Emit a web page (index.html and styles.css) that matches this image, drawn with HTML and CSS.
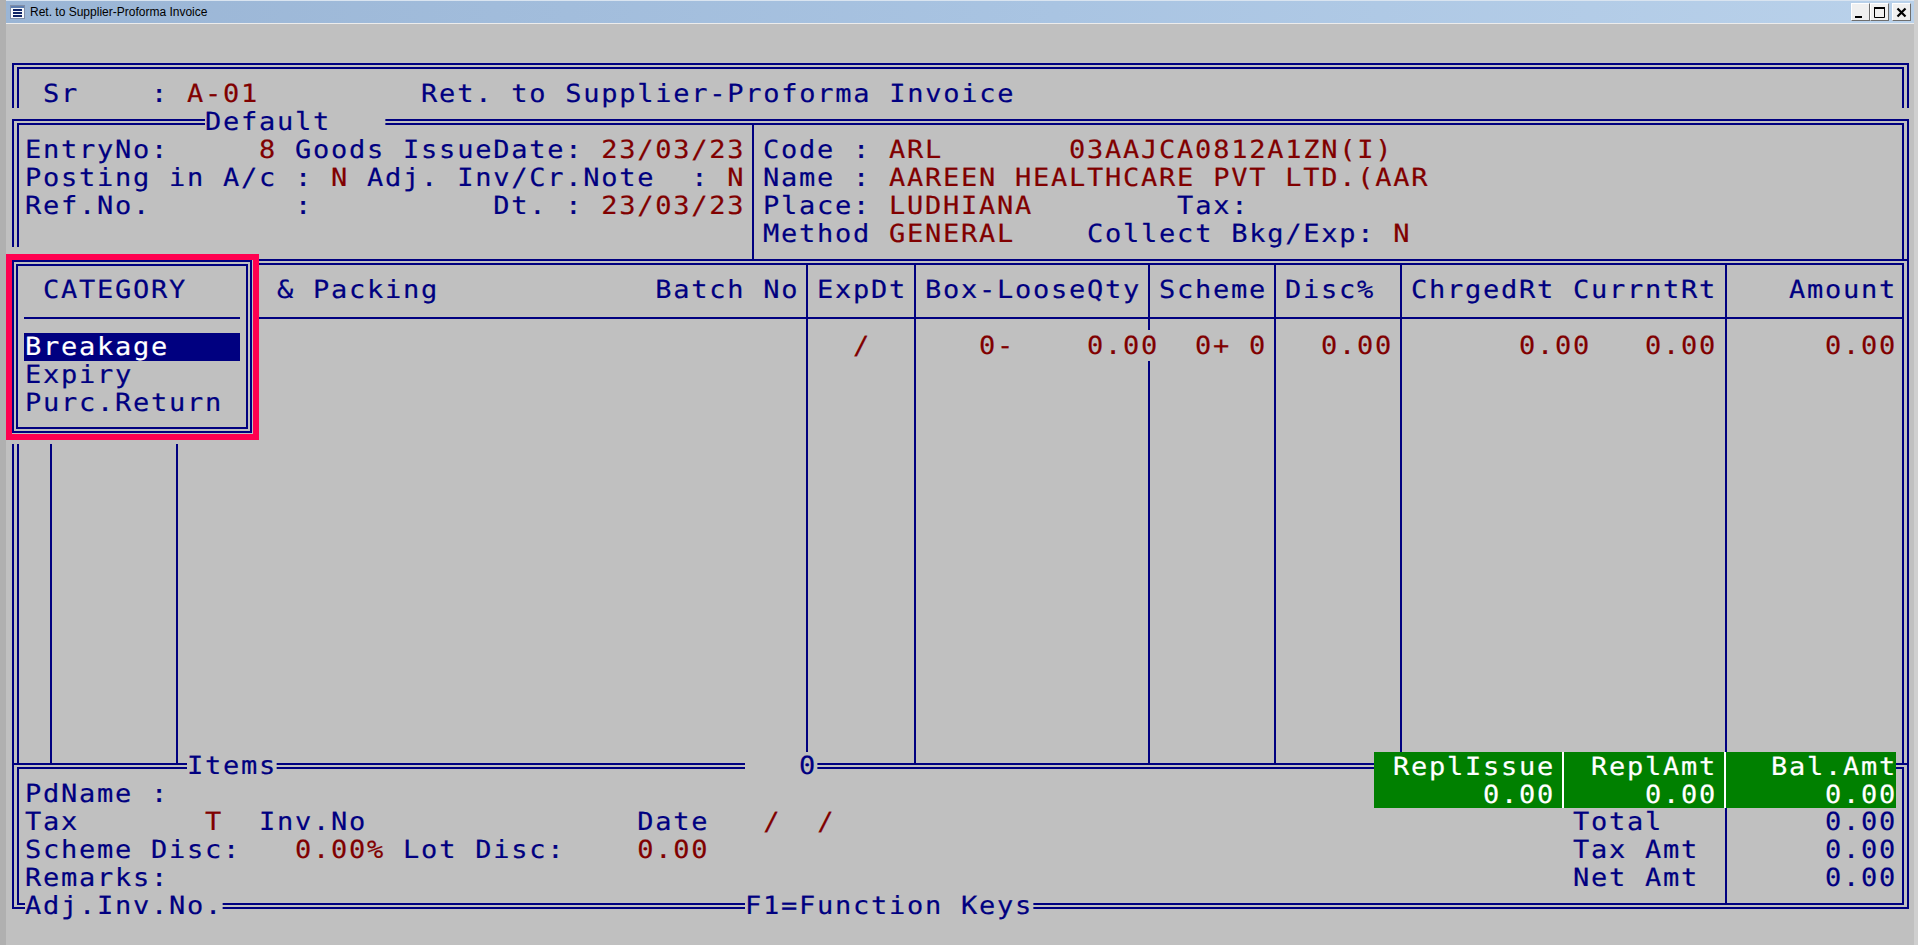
FILE: index.html
```html
<!DOCTYPE html>
<html lang="en">
<head>
<meta charset="utf-8">
<title>Ret. to Supplier-Proforma Invoice</title>
<link rel="stylesheet" href="styles.css">
</head>
<body>
<div class="window">
  <header class="titlebar">
    <svg class="app-icon" width="15" height="14" viewBox="0 0 15 14">
      <rect x="0.5" y="0.5" width="14" height="13" fill="#f6f8fb" stroke="#7f8da8"/>
      <rect x="1" y="1" width="13" height="2" fill="#5f7fb0"/>
      <rect x="3" y="4" width="9" height="2" fill="#0f2466"/>
      <rect x="3" y="7" width="9" height="2" fill="#0f2466"/>
      <rect x="3" y="10" width="9" height="2" fill="#0f2466"/>
    </svg>
    <span class="title-text">Ret. to Supplier-Proforma Invoice</span>
    <div class="win-buttons">
      <button class="win-btn"><svg width="17" height="16" viewBox="0 0 17 16"><rect x="3" y="12" width="7" height="2" fill="#000"/></svg></button>
      <button class="win-btn"><svg width="17" height="16" viewBox="0 0 17 16"><path d="M3.5 3.5h10v10h-10z" fill="none" stroke="#000"/><rect x="3" y="3" width="11" height="2" fill="#000"/></svg></button>
      <button class="win-btn win-close"><svg width="17" height="16" viewBox="0 0 17 16"><path d="M4.5 4.5l8 8M12.5 4.5l-8 8" fill="none" stroke="#000" stroke-width="2.2"/></svg></button>
    </div>
  </header>

  <main class="frame">
    <section class="box box-head">
      <div class="t"> Sr    : <span class="d">A-01</span>         Ret. to Supplier-Proforma Invoice</div>
    </section>

    <section class="box box-info">
      <div class="t legend lg-default">Default   </div>
      <div class="info-left">
        <div class="t">EntryNo:     <span class="d">8</span> Goods IssueDate: <span class="d">23/03/23</span></div>
        <div class="t">Posting in A/c : <span class="d">N</span> Adj. Inv/Cr.Note  : <span class="d">N</span></div>
        <div class="t">Ref.No.        :          Dt. : <span class="d">23/03/23</span></div>
      </div>
      <div class="info-right">
        <div class="t">Code : <span class="d">ARL       03AAJCA0812A1ZN(I)</span></div>
        <div class="t">Name : <span class="d">AAREEN HEALTHCARE PVT LTD.(AAR</span></div>
        <div class="t">Place: <span class="d">LUDHIANA</span>        Tax:</div>
        <div class="t">Method <span class="d">GENERAL</span>    Collect Bkg/Exp: <span class="d">N</span></div>
      </div>
    </section>

    <section class="box box-table">
      <div class="col col-1"><div class="col-head"></div><div class="col-body"></div></div>
      <div class="col col-2"><div class="col-head"></div><div class="col-body"></div></div>
      <div class="col col-3">
        <div class="col-head"><div class="t">     &amp; Packing            Batch No</div></div>
        <div class="col-body"></div>
      </div>
      <div class="col col-4">
        <div class="col-head"><div class="t">ExpDt</div></div>
        <div class="col-body"><div class="t d">  /</div></div>
      </div>
      <div class="col col-5">
        <div class="col-head"><div class="t">Box-LooseQty</div></div>
        <div class="col-body"><div class="t d">   0-    <span class="cut">0.00</span></div></div>
      </div>
      <div class="col col-6">
        <div class="col-head"><div class="t">Scheme</div></div>
        <div class="col-body"><div class="t d">  0+ 0</div></div>
      </div>
      <div class="col col-7">
        <div class="col-head"><div class="t">Disc%</div></div>
        <div class="col-body"><div class="t d">  0.00</div></div>
      </div>
      <div class="col col-8">
        <div class="col-head"><div class="t">ChrgedRt CurrntRt</div></div>
        <div class="col-body"><div class="t d">      0.00   0.00</div></div>
      </div>
      <div class="col col-9">
        <div class="col-head"><div class="t">   Amount</div></div>
        <div class="col-body"><div class="t d">     0.00</div></div>
      </div>
    </section>

    <section class="box box-foot">
      <div class="t legend lg-items">Items</div>
      <div class="t legend lg-count">   0</div>
      <div class="t legend lg-adj">Adj.Inv.No.</div>
      <div class="t legend lg-keys">F1=Function Keys</div>
      <div class="green">
        <div class="green-cell gc-1"><div class="t"> ReplIssue</div><div class="t">      0.00</div></div>
        <div class="green-cell gc-2"><div class="t"> ReplAmt</div><div class="t">    0.00</div></div>
        <div class="green-cell gc-3"><div class="t">  Bal.Amt</div><div class="t">     0.00</div></div>
      </div>
      <div class="foot-left">
        <div class="t">PdName :</div>
        <div class="t">Tax       <span class="d">T</span>  Inv.No               Date   <span class="d">/  /</span></div>
        <div class="t">Scheme Disc:   <span class="d">0.00%</span> Lot Disc:    <span class="d">0.00</span></div>
        <div class="t">Remarks:</div>
      </div>
      <div class="foot-labels">
        <div class="t">Total</div>
        <div class="t">Tax Amt</div>
        <div class="t">Net Amt</div>
      </div>
      <div class="foot-values">
        <div class="t">     0.00</div>
        <div class="t">     0.00</div>
        <div class="t">     0.00</div>
      </div>
    </section>
  </main>

  <aside class="popup">
    <div class="popup-box">
      <div class="popup-head"><div class="t"> CATEGORY</div></div>
      <div class="popup-list">
        <div class="t selected">Breakage</div>
        <div class="t">Expiry</div>
        <div class="t">Purc.Return</div>
      </div>
    </div>
  </aside>
</div>
</body>
</html>
```
FILE: styles.css
```css
* { box-sizing: border-box; }
html, body { margin: 0; padding: 0; height: 100%; overflow: hidden; background: #c0c0c0; }

.window {
  position: relative;
  width: 1918px;
  height: 945px;
  background: #c0c0c0;
  border-left: 6px solid #b0b0b0;
  border-right: 4px solid #cfcfcf;
  overflow: hidden;
}

/* title bar */
.titlebar {
  height: 24px;
  display: flex;
  align-items: center;
  padding: 0 0 1px 4px;
  border-top: 1px solid #d9e4f0;
  border-bottom: 1px solid #ececec;
  background: linear-gradient(90deg, #9ab5d5 0%, #a9c4e2 55%, #b9d1ea 100%);
}
.app-icon { flex: none; }
.title-text {
  margin-left: 5px;
  font: 12px "Liberation Sans", Arial, sans-serif;
  color: #000;
}
.win-buttons { margin-left: auto; display: flex; align-self: flex-start; margin-top: 2px; }
.win-btn {
  width: 19px;
  height: 18px;
  padding: 0;
  margin: 0;
  display: block;
  background: #f0f0f0;
  border: 1px solid;
  border-color: #fff #6e6e6e #6e6e6e #fff;
}
.win-btn svg { display: block; }
.win-close { margin-left: 3px; margin-right: 3px; }

/* character cell text: 18 x 28 px */
.t {
  height: 28px;
  font-family: "DejaVu Sans Mono", monospace;
  font-size: 25px;
  line-height: 28px;
  letter-spacing: 1.62px;
  white-space: pre;
  color: #000080;
  width: max-content;
  text-rendering: geometricPrecision;
  -webkit-text-stroke: 0.2px currentColor;
  transform: translate(1px, 1px) scaleX(1.08);
  transform-origin: 0 50%;
}
.d { color: #800000; }
.cut { background: #c0c0c0; padding: 1px 0; }

/* frames */
.frame { margin: 39px 0 0 6px; width: 1897px; }
.box {
  position: relative;
  border-style: double;
  border-color: #000080;
  border-width: 6px 7px;
}
.box-head {
  height: 45px;
  margin-bottom: 11px;
  border-bottom: 0;
  padding: 10px 0 0 5px;
}
.box-info {
  height: 140px;
  display: flex;
  border-bottom: 0;
}
.box-info::after {
  content: "";
  position: absolute;
  left: -7px;
  bottom: 0;
  width: 7px;
  height: 12px;
  background: #c0c0c0;
}
.info-left {
  width: 735px;
  border-right: 2px solid #000080;
  padding: 10px 0 0 5px;
}
.info-right { padding: 10px 0 0 8px; }

.legend { position: absolute; background: #c0c0c0; }
.lg-default { left: 185px; top: -18px; }
.lg-items { left: 167px; top: -18px; }
.lg-count { left: 725px; top: -18px; }
.lg-adj { left: 5px; top: 122px; }
.lg-keys { left: 725px; top: 122px; }

/* table */
.box-table {
  height: 504px;
  display: flex;
  border-bottom: 0;
}
.col { border-right: 2px solid #000080; flex: none; }
.col-head {
  height: 54px;
  padding: 10px 0 0 8px;
  border-bottom: 2px solid #000080;
}
.col-body { padding: 12px 0 0 8px; }
.col-1 { width: 33px; }
.col-2 { width: 126px; }
.col-3 { width: 630px; }
.col-4 { width: 108px; }
.col-5 { width: 234px; }
.col-6 { width: 126px; }
.col-7 { width: 126px; }
.col-8 { width: 325px; }
.col-9 { flex: 1; border-right: 0; }
.col-9 .col-head, .col-9 .col-body { padding-left: 7px; }

/* footer */
.box-foot {
  height: 146px;
  display: flex;
}
.foot-left { width: 1553px; padding: 10px 0 0 5px; }
.foot-labels {
  width: 155px;
  border-right: 2px solid #000080;
  padding-top: 38px;
}
.foot-values { padding: 38px 0 0 7px; }
.green {
  position: absolute;
  left: 1355px;
  top: -17px;
  width: 522px;
  height: 56px;
  display: flex;
  background: #008000;
}
.green .t { color: #fff; }
.green-cell { height: 56px; border-right: 2px solid #fff; }
.gc-1 { width: 190px; }
.gc-2 { width: 162px; padding-left: 8px; }
.gc-3 { flex: 1; padding-left: 8px; border-right: 0; }

/* popup menu */
.popup {
  position: absolute;
  left: 0;
  top: 254px;
  width: 253px;
  height: 186px;
  padding: 0 1px 1px 0;
  border: 6px solid #ff0050;
  background: #c0c0c0;
  box-shadow: 0 4px 0 #c0c0c0;
}
.popup-box {
  height: 100%;
  border: 6px double #000080;
  padding: 9px 6px 0;
}
.popup-head { height: 44px; border-bottom: 2px solid #000080; }
.popup-list { padding-top: 13px; }
.selected {
  background: #000080;
  color: #fff;
  width: 200px;
  margin-left: -0.93px;
  padding-left: 0.93px;
}
```
